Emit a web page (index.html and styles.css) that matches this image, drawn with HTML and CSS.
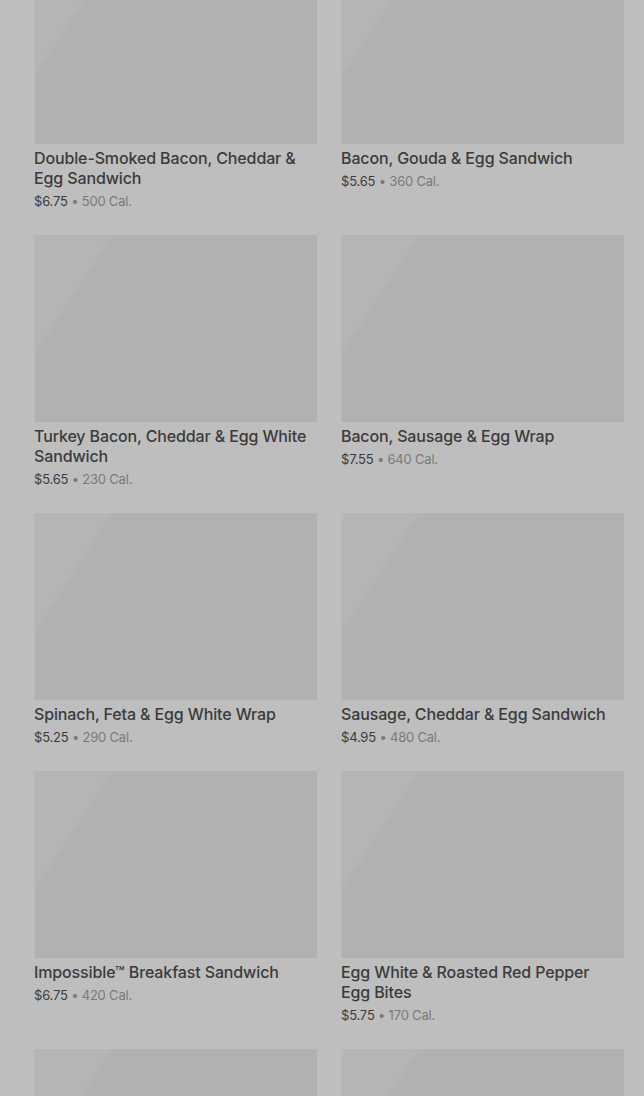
FILE: index.html
```html
<!DOCTYPE html>
<html lang="en">
<head>
    <meta charset="UTF-8">
    <meta name="viewport" content="width=device-width, initial-scale=1.0">
    <title>Hot Breakfast</title>
    <link rel="stylesheet" href="styles.css">
</head>
<body>
    <div class="menu">
        <div class="grid">
            <div class="item">
                <div class="photo"></div>
                <h3>Double-Smoked Bacon, Cheddar &amp; Egg Sandwich</h3>
                <p class="meta"><span class="price">$6.75</span> • 500 Cal.</p>
            </div>
            <div class="item">
                <div class="photo"></div>
                <h3>Bacon, Gouda &amp; Egg Sandwich</h3>
                <p class="meta"><span class="price">$5.65</span> • 360 Cal.</p>
            </div>
            <div class="item">
                <div class="photo"></div>
                <h3>Turkey Bacon, Cheddar &amp; Egg White Sandwich</h3>
                <p class="meta"><span class="price">$5.65</span> • 230 Cal.</p>
            </div>
            <div class="item">
                <div class="photo"></div>
                <h3>Bacon, Sausage &amp; Egg Wrap</h3>
                <p class="meta"><span class="price">$7.55</span> • 640 Cal.</p>
            </div>
            <div class="item">
                <div class="photo"></div>
                <h3>Spinach, Feta &amp; Egg White Wrap</h3>
                <p class="meta"><span class="price">$5.25</span> • 290 Cal.</p>
            </div>
            <div class="item">
                <div class="photo"></div>
                <h3>Sausage, Cheddar &amp; Egg Sandwich</h3>
                <p class="meta"><span class="price">$4.95</span> • 480 Cal.</p>
            </div>
            <div class="item">
                <div class="photo"></div>
                <h3>Impossible™ Breakfast Sandwich</h3>
                <p class="meta"><span class="price">$6.75</span> • 420 Cal.</p>
            </div>
            <div class="item">
                <div class="photo"></div>
                <h3>Egg White &amp; Roasted Red Pepper Egg Bites</h3>
                <p class="meta"><span class="price">$5.75</span> • 170 Cal.</p>
            </div>
            <div class="item">
                <div class="photo"></div>
            </div>
            <div class="item">
                <div class="photo"></div>
            </div>
        </div>
    </div>
</body>
</html>
```

FILE: styles.css
```css
html, body {
    margin: 0;
    padding: 0;
    height: 100%;
    overflow: hidden;
}
body {
    font-family: Inter, "Noto Sans", sans-serif;
    background-color: #bebebe;
    color: #3b3b3b;
}
.menu {
    padding: 0 20px 0 34px;
}
.grid {
    margin-top: -43px; /* scrolled part way into the list */
    display: grid;
    grid-template-columns: 283px 283px;
    column-gap: 24px;
    row-gap: 25px;
}
/* placeholder while the photo loads */
.photo {
    height: 187px;
    background-color: #b1b1b1;
    background-image: linear-gradient(123deg, #b5b5b5 0, #b5b5b5 64px, transparent 65px);
    border-left: 1px solid #b8b8b8;
    box-sizing: border-box;
}
.item h3 {
    margin: 4px 0 0;
    padding-right: 6px;
    font-size: 16px;
    line-height: 20px;
    font-weight: 500;
    letter-spacing: -0.13px;
    color: #3b3b3b;
}
.meta {
    margin: 4px 0 0;
    font-size: 13px;
    line-height: 18px;
    letter-spacing: -0.2px;
    color: #7a7a7a;
}
.price {
    color: #3b3b3b;
}
```
